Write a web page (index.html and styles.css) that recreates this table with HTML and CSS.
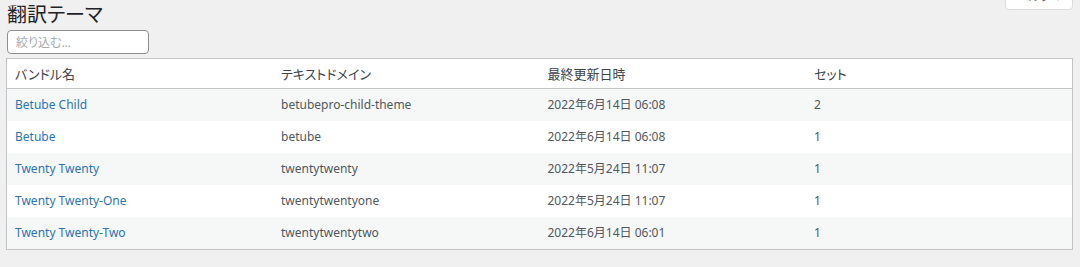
FILE: index.html
```html
<!DOCTYPE html>
<html lang="ja">
<head>
<meta charset="utf-8">
<link rel="stylesheet" href="styles.css">
</head>
<body>
<div class="wrap">
  <div class="help-tab">ヘルプ <span class="caret">▼</span></div>
  <h1 class="title">翻訳テーマ</h1>
  <div class="filter"><input class="filter-input" type="text" placeholder="絞り込む..."></div>
  <table class="bundles">
    <thead>
      <tr><th>バンドル名</th><th>テキストドメイン</th><th>最終更新日時</th><th>セット</th></tr>
    </thead>
    <tbody>
      <tr class="alt"><td><a href="#">Betube Child</a></td><td>betubepro-child-theme</td><td>2022年6月14日 06:08</td><td>2</td></tr>
      <tr><td><a href="#">Betube</a></td><td>betube</td><td>2022年6月14日 06:08</td><td>1</td></tr>
      <tr class="alt"><td><a href="#">Twenty Twenty</a></td><td>twentytwenty</td><td>2022年5月24日 11:07</td><td>1</td></tr>
      <tr><td><a href="#">Twenty Twenty-One</a></td><td>twentytwentyone</td><td>2022年5月24日 11:07</td><td>1</td></tr>
      <tr class="alt"><td><a href="#">Twenty Twenty-Two</a></td><td>twentytwentytwo</td><td>2022年6月14日 06:01</td><td>1</td></tr>
    </tbody>
  </table>
</div>
</body>
</html>
```
FILE: styles.css
```css
html, body {
  margin: 0;
  padding: 0;
  background: #f0f0f1;
  font-family: "Noto Sans", "Noto Sans CJK JP", sans-serif;
  font-feature-settings: "palt";
  color: #3c434a;
}
.wrap {
  position: relative;
  padding: 0 7px 0 6px;
}
.help-tab {
  position: absolute;
  top: -18px;
  right: 7px;
  width: 68px;
  height: 28px;
  box-sizing: border-box;
  background: #fff;
  border: 1px solid #dcdcde;
  border-radius: 0 0 4px 4px;
  font-size: 12px;
  line-height: 28px;
  text-align: center;
  color: #646970;
}
.help-tab .caret { font-size: 7px; vertical-align: middle; }
.title {
  margin: 0;
  padding: 3px 0 0 1px;
  font-size: 20px;
  font-weight: 400;
  line-height: 24px;
  color: #1d2327;
}
.filter {
  padding: 3px 0 4px 1px;
}
.filter-input {
  display: block;
  box-sizing: border-box;
  width: 142px;
  height: 24px;
  margin: 0;
  padding: 0 8px;
  border: 1px solid #8c8f94;
  border-radius: 4px;
  background: #fff;
  font-family: inherit;
  font-feature-settings: "palt";
  font-size: 12px;
}
.filter-input::placeholder { color: #a7aaad; }
.bundles {
  width: 100%;
  border-collapse: collapse;
  table-layout: fixed;
  background: #fff;
  border: 1px solid #c3c4c7;
  box-shadow: 0 1px 1px rgba(0,0,0,0.04);
}
.bundles th {
  text-align: left;
  font-weight: 400;
  font-size: 13px;
  line-height: 18px;
  color: #3c434a;
  padding: 6px 8px 5px;
  border-bottom: 1px solid #c3c4c7;
}
.bundles td {
  font-size: 12px;
  line-height: 16px;
  padding: 8px;
  color: #50575e;
}
.bundles tr.alt td { background: #f6f7f7; }
.bundles a {
  color: #2b74b3;
  text-decoration: none;
}
```
